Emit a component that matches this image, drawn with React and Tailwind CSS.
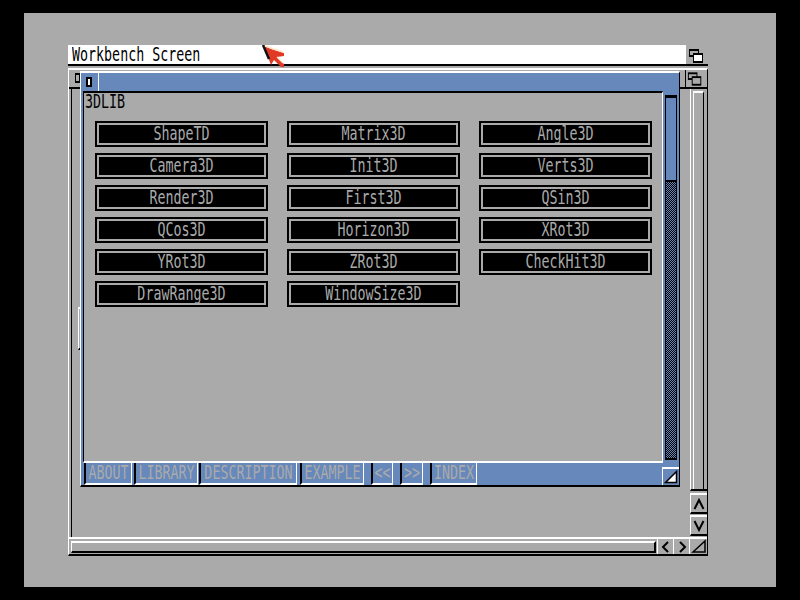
import React from 'react';

// Topaz-like text: 8px wide monospace, stretched vertically like a doubled hires screen
const topaz = "inline-block scale-y-150 font-['DejaVu_Sans_Mono',monospace] text-[13.33px] leading-[16px] whitespace-pre";

const buttons = [
    'ShapeTD', 'Matrix3D', 'Angle3D',
    'Camera3D', 'Init3D', 'Verts3D',
    'Render3D', 'First3D', 'QSin3D',
    'QCos3D', 'Horizon3D', 'XRot3D',
    'YRot3D', 'ZRot3D', 'CheckHit3D',
    'DrawRange3D', 'WindowSize3D',
];

const tabs = [
    { label: 'ABOUT', cls: 'w-[48px]' },
    { label: 'LIBRARY', cls: 'w-[64px] ml-[2px]' },
    { label: 'DESCRIPTION', cls: 'w-[98px] ml-[1px]' },
    { label: 'EXAMPLE', cls: 'w-[64px] ml-[3px]' },
    { label: '<<', cls: 'w-[22px] ml-[7px]' },
    { label: '>>', cls: 'w-[23px] ml-[7px]' },
    { label: 'INDEX', cls: 'w-[47px] ml-[7px]' },
];

const DepthIcon = ({ front = '#aaaaaa', dx = 0, dy = 0 }) => (
    <svg width="22" height="19" viewBox="0 0 22 19">
        <rect x={3 + dx} y={4 + dy} width="10" height="8" fill="#000" />
        <rect x={4 + dx} y={6 + dy} width="8" height="4" fill="#aaaaaa" />
        <rect x={7 + dx} y={8 + dy} width="10" height="10" fill="#000" />
        <rect x={8 + dx} y={10 + dy} width="8" height="6" fill={front} />
    </svg>
);

// red Workbench mouse pointer
const Pointer = () => (
    <svg width="23" height="23" viewBox="0 0 23 23">
        <path d="M1 0 L9 4 L22 8 L22 11 L15 12 L22 19 L22 22 L19 22 L12 15 L9 20 L6 12 Z" fill="#e03a26" />
        <path d="M1 0 L7 14" stroke="#111" strokeWidth="2.5" />
        <path d="M3 1 L21 7" stroke="#ffe6c8" strokeWidth="1.5" />
        <path d="M15 12 L21 18" stroke="#ffe6c8" strokeWidth="1.2" />
    </svg>
);

const Chevron = ({ d }) => (
    <svg width="12" height="12" viewBox="0 0 12 12">
        <path d={d} stroke="#000" strokeWidth="2" fill="none" />
    </svg>
);

const BackWindow = () => (
    <div className="absolute left-0 top-[23px] w-[640px] h-[488px] flex flex-col bg-[#aaaaaa] border-l border-l-white border-t-2 border-t-white border-r border-r-black border-b-2 border-b-black">
        {/* title bar */}
        <div className="h-[19px] flex border-b-2 border-black">
            <div className="w-[12px] pl-[6px] pt-[3px]">
                <div className="w-[5px] h-[10px] border-x border-y-2 border-black" />
            </div>
            <div className="flex-1" />
            <div className="w-[22px] border-l border-black flex items-start">
                <DepthIcon dx={-1} dy={-2} />
            </div>
        </div>

        {/* body */}
        <div className="flex-1 flex">
            <div className="w-[2px]" />
            <div className="flex-1 border-l border-black" />
            <div className="w-[18px] flex flex-col">
                <div className="h-[402px] flex flex-col ml-[1px] border-l border-white border-b-2 border-b-black">
                    <div className="flex-1 ml-[2px] mt-[2px] w-[11px] border-l border-l-white border-t-2 border-t-white border-r border-r-black" />
                </div>
                <div className="h-[2px]" />
                <div className="h-[21px] ml-[1px] border-l border-l-white border-t-2 border-t-white border-b-2 border-b-black flex items-center justify-center">
                    <Chevron d="M1.5 11 L6 2 L10.5 11" />
                </div>
                <div className="h-[1px]" />
                <div className="h-[21px] ml-[1px] border-l border-l-white border-t-2 border-t-white border-b-2 border-b-black flex items-center justify-center">
                    <Chevron d="M1.5 1 L6 10 L10.5 1" />
                </div>
                <div className="flex-1" />
            </div>
        </div>
        <div className="h-[2px] bg-white" />

        {/* bottom border */}
        <div className="h-[15px] flex">
            <div className="w-[2px]" />
            <div className="flex-1 mt-[2px] h-[12px] border-l border-l-white border-t-2 border-t-white border-r-2 border-r-black border-b-2 border-b-black" />
            <div className="w-[16px] ml-[1px] border-l border-white flex items-center justify-center">
                <Chevron d="M8 1 L3 6 L8 11" />
            </div>
            <div className="w-[16px] border-l border-white flex items-center justify-center">
                <Chevron d="M4 1 L9 6 L4 11" />
            </div>
            <div className="w-[18px] border-l border-white">
                <svg width="17" height="15" viewBox="0 0 17 15">
                    <path d="M3 13 L15 2 L15 13 Z" stroke="#000" strokeWidth="1.5" fill="none" />
                </svg>
            </div>
        </div>
    </div>
);

const FrontWindow = () => (
    <div className="absolute left-[12px] top-[26px] w-[600px] h-[416px] flex flex-col bg-[#6688bb] border-l border-l-white border-t-2 border-t-white border-r border-r-black border-b-2 border-b-black">
        {/* title bar */}
        <div className="h-[18px] flex">
            <div className="w-[18px] border-r border-white pl-[5px] pt-[4px]">
                <div className="w-[6px] h-[10px] border-x-2 border-y-2 border-black bg-white" />
            </div>
        </div>

        {/* body */}
        <div className="h-[372px] flex">
            <div className="w-[2px]" />
            <div className="w-[580px] flex flex-col bg-[#aaaaaa] border-l border-l-black border-t-2 border-t-black border-r border-r-white border-b-2 border-b-white">
                <div className="h-[18px] pl-[1px] flex items-center text-black">
                    <span className={topaz}>3DLIB</span>
                </div>
                <div className="mt-[10px] ml-[11px] grid grid-cols-[repeat(3,173px)] gap-x-[19px] gap-y-[6px]">
                    {buttons.map((name) => (
                        <div key={name} className="h-[26px] border-2 border-black">
                            <div className="h-full border-2 border-[#aaaaaa] bg-black flex items-center justify-center text-[#aaaaaa]">
                                <span className={topaz}>{name}</span>
                            </div>
                        </div>
                    ))}
                </div>
            </div>
            <div className="w-[16px] pl-[2px] pt-[4px] pb-[3px] flex flex-col">
                <div className="w-[12px] flex-1 flex flex-col border-x border-black border-b-2">
                    <div className="h-[87px] bg-[#6688bb] border-t-[3px] border-b-2 border-black" />
                    <div className="flex-1 bg-[image:repeating-conic-gradient(#000_0%_25%,#6688bb_0%_50%)] bg-[length:2px_2px]" />
                </div>
            </div>
        </div>

        {/* bottom border with tabs */}
        <div className="h-[22px] flex pl-[3px]">
            {tabs.map((t) => (
                <div key={t.label} className={`${t.cls} h-full border-l-2 border-l-black border-r border-r-white border-b-2 border-b-white flex items-center justify-center text-[#aaaaaa]`}>
                    <span className={topaz}>{t.label}</span>
                </div>
            ))}
            <div className="ml-auto self-end w-[17px] h-[18px] border-l border-l-white border-t-2 border-t-white">
                <svg width="16" height="16" viewBox="0 0 16 16">
                    <path d="M2.5 13.5 L13.5 2.5 L13.5 13.5 Z" fill="#fff" stroke="#000" strokeWidth="1.5" />
                </svg>
            </div>
        </div>
    </div>
);

export default function App() {
    return (
        <div className="w-[800px] h-[600px] bg-black pt-[13px] pl-[24px]">
            <div className="w-[752px] h-[574px] bg-[#aaaaaa] pl-[44px] pt-[32px]">
                <div className="relative w-[640px] h-[511px]">
                    {/* screen title bar */}
                    <div className="h-[21px] flex border-b-2 border-black">
                        <div className="flex-1 bg-white pl-[4px] flex items-center text-black">
                            <span className={topaz}>Workbench Screen</span>
                        </div>
                        <div className="w-[22px] bg-[#aaaaaa]">
                            <DepthIcon front="#ffffff" />
                        </div>
                    </div>

                    <BackWindow />

                    {/* gadget of the back window peeking out */}
                    <div className="absolute left-[10px] top-[262px] w-[6px] h-[43px] border-l border-l-white border-t-2 border-t-white border-b-2 border-b-black" />

                    <FrontWindow />

                    <div className="absolute left-[194px] top-0">
                        <Pointer />
                    </div>
                </div>
            </div>
        </div>
    );
}
